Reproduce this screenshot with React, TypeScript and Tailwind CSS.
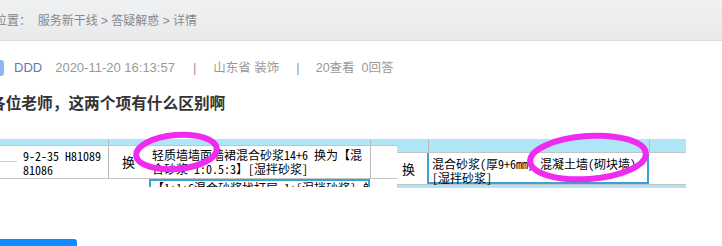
import React from "react";

const shot = { fontFamily: '"Noto Sans Mono CJK SC", "Noto Sans CJK SC", monospace' };

function ImageOne() {
  return (
    <div className="w-[397px] h-[48px] shrink-0 flex flex-col text-[12px] leading-[14px] text-black bg-white" style={shot}>
      <div className="h-[7px] flex bg-[#aee6f7] border-b border-[#c4c4c4]">
        <div className="w-[108px]" />
        <div className="w-[262px] border-l border-[#b8b8b8]" />
        <div className="flex-1 border-l border-[#b8b8b8]" />
      </div>
      <div className="h-[33px] flex border-b border-[#c4c4c4]">
        <div className="w-[108px] relative flex flex-col pl-[23px] pt-[3px]">
          <div className="absolute left-0 top-[15px] w-[17px] border-t border-[#cfcfcf]" />
          <span className="whitespace-nowrap">9-2-35 H81089</span>
          <span>81086</span>
        </div>
        <div className="w-[262px] border-l border-[#b8b8b8] flex">
          <div className="w-[41px] flex items-center pl-[13px] text-[13px]">换</div>
          <div className="flex-1 pl-[2px] pt-[2px] whitespace-nowrap">
            <div>轻质墙墙面墙裙混合砂浆14+6 换为【混</div>
            <div>合砂浆 1:0.5:3】[湿拌砂浆]</div>
          </div>
        </div>
        <div className="flex-1 border-l border-[#b8b8b8]" />
      </div>
      <div className="flex-1 flex overflow-hidden">
        <div className="w-[149px]" />
        <div className="w-[221px] border-l-2 border-t-2 border-r-2 border-[#3aa2d4] pl-[1px] whitespace-nowrap overflow-hidden">
          【1:1:6混合砂浆找打层 1:[湿拌砂浆] 单
        </div>
        <div className="flex-1" />
      </div>
    </div>
  );
}

function ImageTwo() {
  return (
    <div className="w-[289px] h-[49px] shrink-0 flex flex-col text-[12px] leading-[14px] text-black bg-white" style={shot}>
      <div className="h-[14px] flex bg-[#aee6f7] border-b border-[#c4c4c4]">
        <div className="w-[31px]" />
        <div className="w-[221px] border-l border-[#b8b8b8]" />
        <div className="flex-1 border-l border-[#b8b8b8]" />
      </div>
      <div className="h-[32px] flex border-b border-[#c4c4c4]">
        <div className="w-[31px] flex items-center pl-[5px] text-[13px]">换</div>
        <div className="w-[222px] -ml-[1px] border-2 border-t-0 border-[#3aa2d4] pl-[3px] pt-[4px] whitespace-nowrap">
          <div>混合砂浆(厚9+6mm) 混凝土墙(砌块墙)</div>
          <div>[湿拌砂浆]</div>
        </div>
        <div className="flex-1" />
      </div>
      <div className="flex-1 bg-[#aee6f7]" />
    </div>
  );
}

export default function App() {
  return (
    <div
      className="w-[722px] h-[246px] overflow-hidden bg-white"
      style={{ fontFamily: '"Liberation Sans", "Noto Sans CJK SC", sans-serif' }}
    >
      <div className="h-[41px] bg-gradient-to-b from-[#f0f1f3] to-[#e9eaec] border-b border-[#dcdcdc] flex items-center pt-[1px]">
        <div className="-ml-[5px] text-[12px] text-[#888] whitespace-nowrap">
          位置：&nbsp;&nbsp;服务新干线 &gt; 答疑解惑 &gt; 详情
        </div>
      </div>

      <div className="mt-[19px] h-[16px] flex items-center text-[13px] text-[#999] whitespace-nowrap">
        <div className="w-4 h-4 -ml-[12px] rounded-[3px] bg-[#8db6ee]" />
        <span className="ml-[10px] text-[#6577b0]">DDD</span>
        <span className="ml-[13px]">2020-11-20 16:13:57</span>
        <span className="ml-[18px]">|</span>
        <span className="ml-[17px] text-[12.5px]">山东省 装饰</span>
        <span className="ml-[17px]">|</span>
        <span className="ml-[16px] text-[12.5px]">20查看</span>
        <span className="ml-[7px] text-[12.5px]">0回答</span>
      </div>

      <h1 className="mt-[16px] -ml-[10px] text-[15.7px] leading-[24px] font-bold text-[#333] whitespace-nowrap">
        各位老师，这两个项有什么区别啊
      </h1>

      <div className="relative mt-[23px] flex">
        <ImageOne />
        <ImageTwo />
        <svg className="absolute left-0 top-[-10px] pointer-events-none" width="722" height="62" viewBox="0 0 722 62">
          <ellipse cx="176.5" cy="23" rx="40.5" ry="17" fill="none" stroke="#f02bf0" strokeWidth="6" transform="rotate(-5 176.5 23)" />
          <ellipse cx="588" cy="28.5" rx="58" ry="21.5" fill="none" stroke="#f02bf0" strokeWidth="6" transform="rotate(-4 588 28.5)" />
        </svg>
      </div>

      <div className="mt-[51px] w-[77px] h-[32px] bg-[#0d8bff] rounded-tr-[3px]" />
    </div>
  );
}
